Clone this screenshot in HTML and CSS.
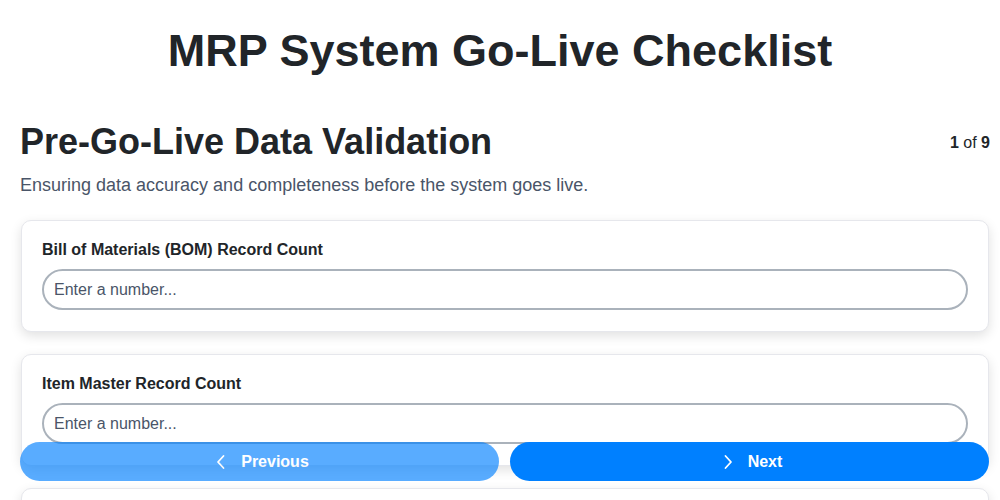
FILE: index.html
```html
<!DOCTYPE html>
<html lang="en">
<head>
<meta charset="utf-8">
<title>MRP System Go-Live Checklist</title>
<link rel="stylesheet" href="styles.css">
</head>
<body>
<header class="page-header">
  <h1 class="page-title">MRP System Go-Live Checklist</h1>
</header>
<main class="content">
  <div class="section-head">
    <h2 class="section-title">Pre-Go-Live Data Validation</h2>
    <div class="step-count"><strong>1</strong> of <strong>9</strong></div>
  </div>
  <p class="section-desc">Ensuring data accuracy and completeness before the system goes live.</p>
  <div class="cards">
    <div class="card">
      <label class="field-label">Bill of Materials (BOM) Record Count</label>
      <input class="field-input" type="text" placeholder="Enter a number...">
    </div>
    <div class="card">
      <label class="field-label">Item Master Record Count</label>
      <input class="field-input" type="text" placeholder="Enter a number...">
    </div>
    <div class="card">
      <label class="field-label">Routing Record Count</label>
      <input class="field-input" type="text" placeholder="Enter a number...">
    </div>
  </div>
</main>
<nav class="nav-bar">
  <button class="nav-btn prev" type="button">
    <svg class="chev" width="10" height="16" viewBox="0 0 10 16"><path d="M7.5 2 L2 8 L7.5 14" fill="none" stroke="#fff" stroke-width="1.8" stroke-linecap="round" stroke-linejoin="round"/></svg>
    <span>Previous</span>
  </button>
  <button class="nav-btn next" type="button">
    <svg class="chev" width="10" height="16" viewBox="0 0 10 16"><path d="M2.5 2 L8 8 L2.5 14" fill="none" stroke="#fff" stroke-width="1.8" stroke-linecap="round" stroke-linejoin="round"/></svg>
    <span>Next</span>
  </button>
</nav>
</body>
</html>
```
FILE: styles.css
```css
* { box-sizing: border-box; }
html, body { margin: 0; padding: 0; background: #fff; }
body {
  font-family: "Liberation Sans", Arial, sans-serif;
  color: #212529;
  overflow: hidden;
}
.page-header { padding-top: 24px; text-align: center; }
.page-title {
  margin: 0;
  font-size: 45px;
  line-height: 53px;
  font-weight: 700;
  color: #212529;
}
.content { padding: 43px 11px 0 20px; }
.section-head {
  display: flex;
  justify-content: space-between;
  align-items: center;
}
.section-title {
  margin: 0;
  font-size: 36px;
  line-height: 43px;
  font-weight: 700;
}
.step-count { font-size: 16px; color: #212529; margin-right: -1px; padding-top: 2px; }
.step-count strong { font-weight: 700; }
.section-desc {
  margin: 9px 0 0;
  font-size: 18px;
  line-height: 27px;
  color: #4a5568;
}
.cards {
  margin-top: 21px;
  display: flex;
  flex-direction: column;
  gap: 22px;
  padding-left: 1px;
}
.card {
  background: #fff;
  border: 1px solid #e6e7ec;
  border-radius: 10px;
  box-shadow: 0 4px 12px rgba(0, 0, 0, 0.12);
  padding: 19px 20px 21px;
  display: flex;
  flex-direction: column;
}
.field-label {
  font-size: 16px;
  line-height: 19px;
  font-weight: 700;
  color: #212529;
}
.field-input {
  margin-top: 10px;
  height: 41px;
  border: 2px solid #aab2bb;
  border-radius: 999px;
  padding: 0 10px;
  font-family: "Liberation Sans", Arial, sans-serif;
  font-size: 16px;
  color: #212529;
  background: #fff;
  outline: none;
}
.field-input::placeholder { color: #4a5568; opacity: 1; }
.nav-bar {
  position: fixed;
  left: 20px;
  right: 11px;
  bottom: 19px;
  display: flex;
  gap: 11px;
}
.nav-btn {
  flex: 1;
  height: 39px;
  border: none;
  border-radius: 999px;
  background: #0080ff;
  color: #fff;
  font-family: "Liberation Sans", Arial, sans-serif;
  font-size: 16px;
  font-weight: 700;
  display: flex;
  align-items: center;
  justify-content: center;
  gap: 15px;
  padding: 0 0 0 6px;
}
.nav-btn.prev { opacity: 0.65; }
.chev { display: block; }
```
